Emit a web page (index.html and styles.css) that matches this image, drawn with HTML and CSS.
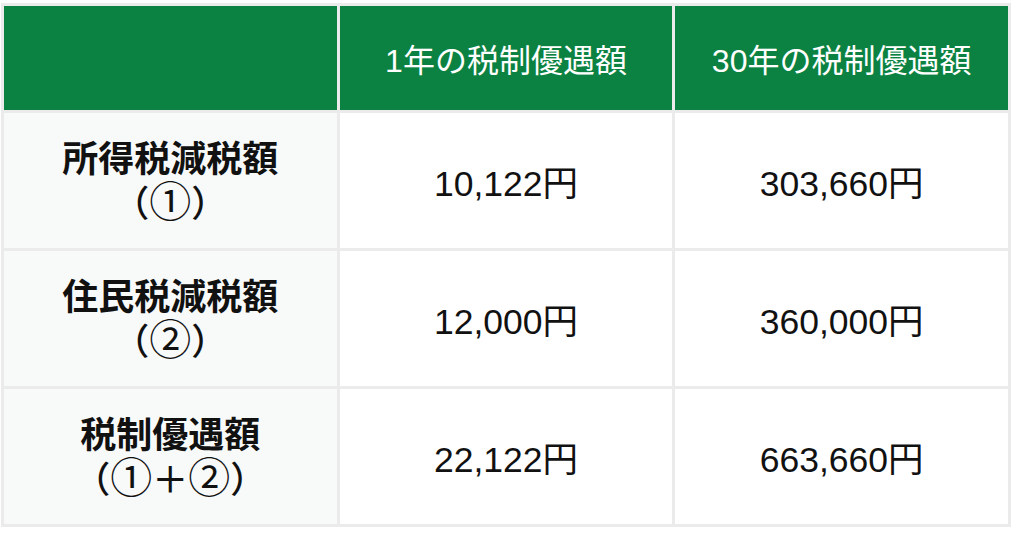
FILE: index.html
```html
<!DOCTYPE html>
<html lang="ja">
<head>
<meta charset="utf-8">
<title>税制優遇額</title>
<link rel="stylesheet" href="styles.css">
</head>
<body>
<table class="tax">
  <thead>
    <tr>
      <th class="blank"></th>
      <th>1年の税制優遇額</th>
      <th>30年の税制優遇額</th>
    </tr>
  </thead>
  <tbody>
    <tr>
      <td class="label"><div class="line">所得税減税額</div><div class="line sub">（<span class="circ">①</span>）</div></td>
      <td class="num">10,122円</td>
      <td class="num">303,660円</td>
    </tr>
    <tr>
      <td class="label"><div class="line">住民税減税額</div><div class="line sub">（<span class="circ">②</span>）</div></td>
      <td class="num">12,000円</td>
      <td class="num">360,000円</td>
    </tr>
    <tr>
      <td class="label"><div class="line">税制優遇額</div><div class="line sub">（<span class="circ">①</span>＋<span class="circ">②</span>）</div></td>
      <td class="num">22,122円</td>
      <td class="num">663,660円</td>
    </tr>
  </tbody>
</table>
</body>
</html>
```
FILE: styles.css
```css
html, body {
  margin: 0;
  padding: 0;
  background: #ffffff;
}
body {
  padding: 3px 0 0 1px;
  font-family: "Liberation Sans", "Noto Sans CJK JP", sans-serif;
  color: #111111;
}
.tax {
  width: 1010px;
  table-layout: fixed;
  border-collapse: separate;
  border-spacing: 3px;
  background: #ebebeb;
}
.tax th {
  height: 104px;
  padding: 0;
  background: #0b8242;
  color: #ffffff;
  font-weight: normal;
  font-size: 32px;
  text-align: center;
  vertical-align: middle;
}
.tax td {
  height: 135px;
  padding: 0;
  text-align: center;
  vertical-align: middle;
  background: #ffffff;
}
.tax td.label {
  background: #f8f9f9;
  font-family: "Liberation Sans", "Noto Sans CJK JP", sans-serif;
  font-weight: bold;
  font-size: 36px;
}
.line {
  height: 43px;
  line-height: 43px;
}
.line.sub {
  font-weight: 500;
}
.circ {
  font-weight: normal;
  font-size: 42px;
  line-height: 43px;
}
.tax td.num {
  font-size: 35.5px;
}
```
